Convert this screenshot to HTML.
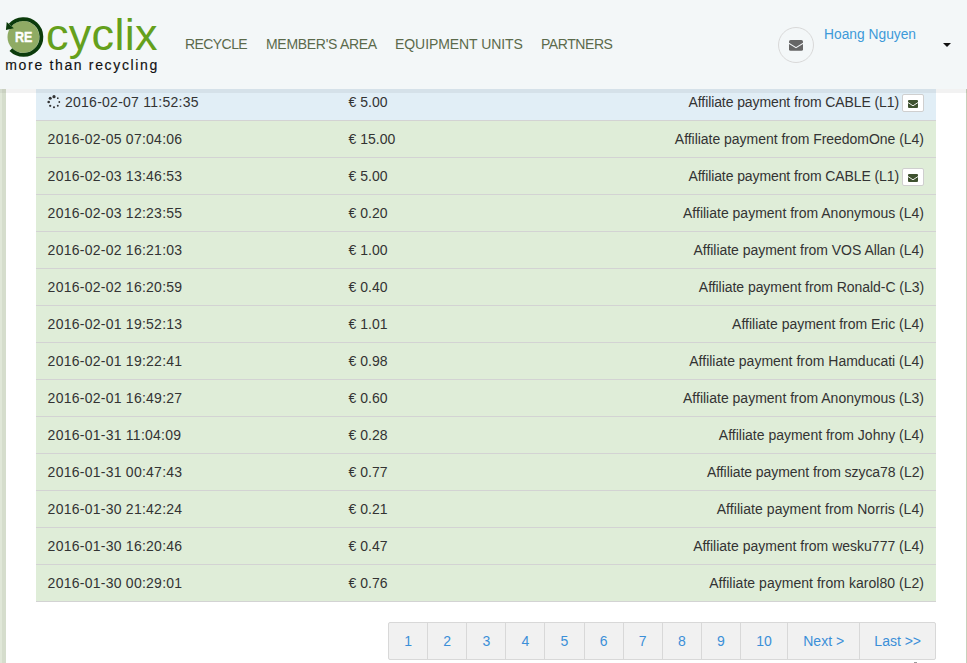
<!DOCTYPE html>
<html><head><meta charset="utf-8">
<style>
*{margin:0;padding:0;box-sizing:border-box}
html,body{width:967px;height:663px;overflow:hidden;background:#fff;font-family:"Liberation Sans",sans-serif;color:#333}
#lstripe{position:absolute;left:0;top:0;width:6px;height:663px;background:#d5ddcc}
#lstripe2{position:absolute;left:0;top:0;width:2px;height:663px;background:#e0e7d8}
#rstripe{position:absolute;left:966px;top:0;width:1px;height:663px;background:#c8d1bc}
#tbl{position:absolute;left:36px;top:84px;width:900px}
.row{position:relative;height:37px;background:#dfedd8;border-bottom:1px solid #d3d3d3;font-size:14px}
.row.b{background:#e1eef6}
.row span{position:absolute;top:0;line-height:36px;white-space:nowrap}
.d{left:11.6px;letter-spacing:0.25px}
.a{left:312.6px}
.t{right:12px}
.t.m{right:37px}
.btn{position:absolute;left:866px;top:10px;width:22px;height:18px;background:#fff;border:1px solid #cfcfcf;border-radius:2px}
#hdr{position:absolute;left:0;top:0;width:967px;height:89px;background:#f3f7f8}
#shadow{position:absolute;left:0;top:89px;width:967px;height:4px;background:rgba(0,0,0,0.05)}
.nav{position:absolute;top:34px;font-size:14px;color:#5b6a4b;line-height:20px;white-space:nowrap}
#pg{position:absolute;left:388px;top:622px;height:38px;border:1px solid #d8d8d8;border-radius:2px;background:#f1f1f1;display:flex}
#pg div{height:36px;line-height:36px;text-align:center;font-size:14px;color:#3b8fd8;border-left:1px solid #d8d8d8;box-sizing:border-box;flex:none}
#pg div:first-child{border-left:none}
</style></head><body>
<div id="lstripe"></div><div id="lstripe2"></div><div id="rstripe"></div>

<div id="tbl">
<div class="row b"><svg style="position:absolute;left:11.4px;top:11.2px" width="14" height="14" viewBox="0 0 14 14"><g fill="#333"><circle cx="7" cy="1.7" r="1.6"/><circle cx="3.2" cy="3.3" r="1.5"/><circle cx="1.7" cy="7" r="1.3"/><circle cx="3.2" cy="10.8" r="1.15"/><circle cx="7" cy="12.3" r="1.05"/><circle cx="10.8" cy="10.8" r="0.95"/><circle cx="12.3" cy="7" r="0.9"/><circle cx="10.8" cy="3.2" r="0.85"/></g></svg><span class="d" style="left:29px">2016-02-07 11:52:35</span><span class="a">€ 5.00</span><span class="t m" style="letter-spacing:-0.1px">Affiliate payment from CABLE (L1)</span><div class="btn"><svg style="position:absolute;left:5px;top:5px" width="10" height="8" viewBox="0 0 10 8"><rect x="0" y="0" width="10" height="8" rx="1" fill="#3f5230"/><path d="M-0.2 2.4 L5 5.8 L10.2 2.4" fill="none" stroke="#fff" stroke-width="0.9"/></svg></div></div>
<div class="row"><span class="d">2016-02-05 07:04:06</span><span class="a">€ 15.00</span><span class="t" style="letter-spacing:-0.03px">Affiliate payment from FreedomOne (L4)</span></div>
<div class="row"><span class="d">2016-02-03 13:46:53</span><span class="a">€ 5.00</span><span class="t m" style="letter-spacing:-0.1px">Affiliate payment from CABLE (L1)</span><div class="btn"><svg style="position:absolute;left:5px;top:5px" width="10" height="8" viewBox="0 0 10 8"><rect x="0" y="0" width="10" height="8" rx="1" fill="#3f5230"/><path d="M-0.2 2.4 L5 5.8 L10.2 2.4" fill="none" stroke="#fff" stroke-width="0.9"/></svg></div></div>
<div class="row"><span class="d">2016-02-03 12:23:55</span><span class="a">€ 0.20</span><span class="t">Affiliate payment from Anonymous (L4)</span></div>
<div class="row"><span class="d">2016-02-02 16:21:03</span><span class="a">€ 1.00</span><span class="t" style="letter-spacing:-0.03px">Affiliate payment from VOS Allan (L4)</span></div>
<div class="row"><span class="d">2016-02-02 16:20:59</span><span class="a">€ 0.40</span><span class="t" style="letter-spacing:-0.05px">Affiliate payment from Ronald-C (L3)</span></div>
<div class="row"><span class="d">2016-02-01 19:52:13</span><span class="a">€ 1.01</span><span class="t">Affiliate payment from Eric (L4)</span></div>
<div class="row"><span class="d">2016-02-01 19:22:41</span><span class="a">€ 0.98</span><span class="t">Affiliate payment from Hamducati (L4)</span></div>
<div class="row"><span class="d">2016-02-01 16:49:27</span><span class="a">€ 0.60</span><span class="t">Affiliate payment from Anonymous (L3)</span></div>
<div class="row"><span class="d">2016-01-31 11:04:09</span><span class="a">€ 0.28</span><span class="t">Affiliate payment from Johny (L4)</span></div>
<div class="row"><span class="d">2016-01-31 00:47:43</span><span class="a">€ 0.77</span><span class="t" style="letter-spacing:-0.06px">Affiliate payment from szyca78 (L2)</span></div>
<div class="row"><span class="d">2016-01-30 21:42:24</span><span class="a">€ 0.21</span><span class="t" style="letter-spacing:0.065px">Affiliate payment from Norris (L4)</span></div>
<div class="row"><span class="d">2016-01-30 16:20:46</span><span class="a">€ 0.47</span><span class="t">Affiliate payment from wesku777 (L4)</span></div>
<div class="row"><span class="d">2016-01-30 00:29:01</span><span class="a">€ 0.76</span><span class="t" style="letter-spacing:0.03px">Affiliate payment from karol80 (L2)</span></div>
</div>

<div id="pg">
<div style="width:38.12px">1</div><div style="width:39.12px">2</div><div style="width:39.12px">3</div><div style="width:39.12px">4</div><div style="width:39.12px">5</div><div style="width:39.12px">6</div><div style="width:39.12px">7</div><div style="width:39.12px">8</div><div style="width:39.12px">9</div><div style="width:47.24px">10</div><div style="width:71.9px">Next &gt;</div><div style="width:76.2px">Last &gt;&gt;</div>
</div>

<div id="hdr">
<svg style="position:absolute;left:0;top:0" width="60" height="60" viewBox="0 0 60 60">
<circle cx="23.4" cy="37" r="15.9" fill="#8fab64"/>
<path d="M10.20 25.02 A17.9 17.9 0 1 1 10.84 49.66" fill="none" stroke="#0b3b0b" stroke-width="3.8"/>
<path d="M6.70 21.88 L13.84 28.30 L5.92 29.92 Z" fill="#0b3b0b"/>
<text x="14.9" y="42.4" font-family="Liberation Sans" font-weight="bold" font-size="14.2" textLength="17.4" lengthAdjust="spacingAndGlyphs" fill="#fff" stroke="#fff" stroke-width="0.4">RE</text>
</svg>
<div style="position:absolute;left:46px;top:9.5px;font-size:45px;line-height:50px;letter-spacing:0.3px;color:#64a01c;white-space:nowrap">cyclix</div>
<div style="position:absolute;left:5.3px;top:56.5px;font-size:14px;line-height:16px;color:#111;letter-spacing:1.66px;-webkit-text-stroke:0.15px #111;white-space:nowrap">more than recycling</div>
<div class="nav" style="left:185px;letter-spacing:-0.57px">RECYCLE</div>
<div class="nav" style="left:266px;letter-spacing:-0.3px">MEMBER'S AREA</div>
<div class="nav" style="left:395px;letter-spacing:-0.07px">EQUIPMENT UNITS</div>
<div class="nav" style="left:541px;letter-spacing:-0.43px">PARTNERS</div>
<div style="position:absolute;left:778px;top:27px;width:36px;height:36px;border:1px solid #d9d9d9;border-radius:50%"></div>
<svg style="position:absolute;left:789px;top:40px" width="14" height="11" viewBox="0 0 14 11"><rect x="0" y="0" width="14" height="10.8" rx="1.6" fill="#666"/><path d="M-0.3 3.2 L7 7.6 L14.3 3.2" fill="none" stroke="#f3f6f8" stroke-width="1.1"/></svg>
<div style="position:absolute;left:824px;top:24.5px;font-size:13.8px;color:#3d9ad9;line-height:20px;white-space:nowrap">Hoang Nguyen</div>
<div style="position:absolute;left:943px;top:43px;width:0;height:0;border-left:4px solid transparent;border-right:4px solid transparent;border-top:4px solid #111"></div>
</div>
<div id="shadow"></div>
<div style="position:absolute;left:914px;top:662px;width:3px;height:1px;background:#9a9a9a"></div>
</body></html>
